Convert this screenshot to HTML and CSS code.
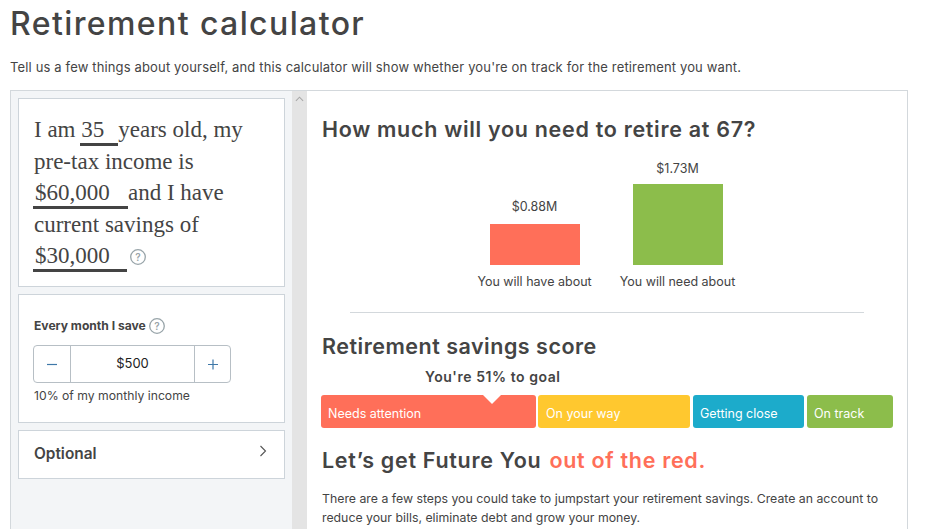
FILE: index.html
```html
<!DOCTYPE html>
<html lang="en">
<head>
    <meta charset="UTF-8">
    <title>Retirement calculator</title>
    <link rel="stylesheet" href="styles.css">
</head>
<body>

    <h1>Retirement calculator</h1>
    <p class="intro">Tell us a few things about yourself, and this calculator will show whether you're on track for the retirement you want.</p>

    <div class="calculator">
        <div class="sidebar">
            <div class="card sentence">
                I am <span class="field field-age">35</span>years old, my<br>
                pre-tax income is<br>
                <span class="field field-income">$60,000</span>and I have<br>
                current savings of<br>
                <span class="field field-savings">$30,000</span><svg class="help help-large" viewBox="0 0 16 16"><circle cx="8" cy="8" r="7.3"/><text x="8" y="11.5">?</text></svg>
            </div>

            <div class="card monthly">
                <div class="monthly-label">Every month I save
                    <svg class="help" viewBox="0 0 16 16"><circle cx="8" cy="8" r="7.3"/><text x="8" y="11.5">?</text></svg>
                </div>
                <div class="stepper">
                    <div class="step">
                        <svg viewBox="0 0 12 12"><path d="M1 6.5h10"/></svg>
                    </div>
                    <div class="amount">$500</div>
                    <div class="step">
                        <svg viewBox="0 0 12 12"><path d="M1 6.5h10M6 1.5v10"/></svg>
                    </div>
                </div>
                <div class="monthly-note">10% of my monthly income</div>
            </div>

            <div class="card optional">
                <span>Optional</span>
                <svg viewBox="0 0 8 12"><path d="M1.5 1l5 5-5 5"/></svg>
            </div>
        </div>

        <div class="scrollbar">
            <svg viewBox="0 0 10 6"><path d="M1 5l4-4 4 4"/></svg>
        </div>

        <div class="results">
            <h2 class="first">How much will you need to retire at 67?</h2>

            <div class="chart">
                <div class="chart-col">
                    <div class="chart-value">$0.88M</div>
                    <div class="bar bar-have"></div>
                    <div class="chart-label">You will have about</div>
                </div>
                <div class="chart-col">
                    <div class="chart-value">$1.73M</div>
                    <div class="bar bar-need"></div>
                    <div class="chart-label">You will need about</div>
                </div>
            </div>

            <hr>

            <h2 class="score-title">Retirement savings score</h2>
            <div class="goal">You're 51% to goal</div>

            <div class="score">
                <div class="segment seg-red">Needs attention<span class="marker"></span></div>
                <div class="segment seg-yellow">On your way</div>
                <div class="segment seg-blue">Getting close</div>
                <div class="segment seg-green">On track</div>
            </div>

            <h2 class="future">Let’s get Future You <span class="red">out of the red.</span></h2>

            <p class="steps">There are a few steps you could take to jumpstart your retirement savings. Create an account to reduce your bills, eliminate debt and grow your money.</p>
        </div>
    </div>

</body>
</html>
```

FILE: styles.css
```css
html, body {
    height: 529px;
    overflow: hidden;
}
body {
    font-family: "Inter", "Open Sans", sans-serif;
    color: #444;
    background-color: #fff;
    margin: 0;
    padding: 0 33px 0 10px;
    box-sizing: border-box;
}
h1 {
    font-size: 32px;
    line-height: 40px;
    font-weight: 500;
    letter-spacing: 1.4px;
    margin: 4px 0 0;
}
.intro {
    font-size: 13px;
    letter-spacing: 0.15px;
    line-height: 18px;
    margin: 14px 0 14px;
}
.calculator {
    display: flex;
    height: 439px;
    border: 1px solid #d3d8dc;
    border-bottom: 0;
    box-sizing: border-box;
}
.sidebar {
    width: 281px;
    flex: none;
    box-sizing: border-box;
    padding: 7px;
    background-color: #f3f5f7;
    display: flex;
    flex-direction: column;
    gap: 7px;
}
.card {
    background-color: #fff;
    border: 1px solid #cdd4da;
    box-sizing: border-box;
}
.sentence {
    height: 189px;
    padding: 15px 0 0 15px;
    font-family: "Liberation Serif", serif;
    font-size: 23px;
    line-height: 31px;
    color: #444;
}
.field {
    display: inline-block;
    line-height: 26px;
    height: 26px;
    border-bottom: 3px solid #444;
    padding-left: 1px;
    vertical-align: baseline;
}
.field-age { width: 37px; margin-left: -1px; }
.field-income { width: 93px; margin-left: -1px; padding-left: 2px; }
.field-savings { width: 92px; margin-left: -1px; padding-left: 2px; }
.help {
    width: 16px;
    height: 16px;
    vertical-align: -4px;
}
.help-large {
    margin-left: 3px;
    vertical-align: -2px;
}
.help circle {
    fill: none;
    stroke: #98a4a9;
    stroke-width: 1.3;
}
.help text {
    font-family: "Inter", sans-serif;
    font-size: 10px;
    font-weight: 600;
    fill: #98a4a9;
    text-anchor: middle;
}
.monthly {
    height: 129px;
    padding: 23px 0 0 15px;
}
.monthly-label {
    font-size: 12.1px;
    font-weight: 700;
    line-height: 16px;
    height: 16px;
    white-space: nowrap;
}
.stepper {
    display: flex;
    width: 198px;
    height: 38px;
    margin: 11px 0 0 -1px;
    border: 1px solid #b7bfc5;
    border-radius: 4px;
    box-sizing: border-box;
}
.step {
    width: 36px;
    flex: none;
    display: flex;
    align-items: center;
    justify-content: center;
}
.step:last-child {
    width: 35px;
}
.step svg {
    width: 12px;
    height: 12px;
    fill: none;
    stroke: #3f78a8;
    stroke-width: 1.2;
}
.amount {
    flex: 1;
    border-left: 1px solid #b7bfc5;
    border-right: 1px solid #b7bfc5;
    text-align: center;
    font-size: 13px;
    line-height: 35px;
    color: #222;
}
.monthly-note {
    font-size: 12.2px;
    line-height: 16px;
    margin-top: 5px;
}
.optional {
    height: 49px;
    padding: 0 17px 0 15px;
    display: flex;
    align-items: center;
    justify-content: space-between;
    font-size: 15.4px;
    font-weight: 600;
}
.optional span {
    margin-top: -3px;
}
.optional svg {
    width: 8px;
    height: 12px;
    margin-top: -7px;
    fill: none;
    stroke: #555;
    stroke-width: 1.1;
}
.scrollbar {
    width: 15px;
    flex: none;
    background-color: #e4e4e4;
    text-align: center;
}
.scrollbar svg {
    display: block;
    width: 9px;
    height: 6px;
    margin: 5px auto 0;
    fill: none;
    stroke: #a8a8a8;
    stroke-width: 1.2;
}
.results {
    flex: 1;
    min-width: 0;
    padding: 0 14px 0 15px;
}
h2 {
    font-size: 21.5px;
    line-height: 28px;
    font-weight: 600;
    letter-spacing: 0.7px;
    margin: 0;
}
h2.first {
    margin-top: 24px;
}
.chart {
    display: flex;
    justify-content: center;
    align-items: flex-end;
    height: 136px;
    margin: 11px 0 0 -3px;
}
.chart-col {
    width: 143px;
    display: flex;
    flex-direction: column;
    align-items: center;
    font-size: 12.5px;
}
.chart-value {
    line-height: 16px;
    margin-bottom: 9px;
}
.bar {
    width: 90px;
}
.bar-have {
    height: 41px;
    background-color: #ff6f59;
}
.bar-need {
    height: 81px;
    margin-top: -2px;
    background-color: #8cbd4b;
}
.chart-label {
    line-height: 16px;
    margin-top: 9px;
}
hr {
    border: 0;
    border-top: 1px solid #d3d8dc;
    margin: 22px 29px 0 28px;
}
h2.score-title {
    margin-top: 19px;
    letter-spacing: 0.5px;
}
.goal {
    font-size: 14px;
    font-weight: 600;
    letter-spacing: 0.55px;
    line-height: 18px;
    margin: 8px 0 9px 103px;
}
.score {
    display: flex;
    gap: 2px;
    height: 33px;
    margin-left: -1px;
}
.segment {
    position: relative;
    box-sizing: border-box;
    border-radius: 3px;
    color: #fff;
    font-size: 12.5px;
    line-height: 16px;
    padding: 11px 0 0 7px;
}
.seg-red { width: 215px; background-color: #ff6f59; }
.seg-yellow { width: 152px; background-color: #ffc82f; padding-left: 8px; }
.seg-blue { width: 111px; margin-left: 1px; background-color: #1cabcb; }
.seg-green { width: 86px; margin-left: 1px; background-color: #8cbd4b; }
.marker {
    position: absolute;
    top: 0;
    left: 162px;
    border-left: 9px solid transparent;
    border-right: 9px solid transparent;
    border-top: 9px solid #fff;
}
h2.future {
    margin-top: 18px;
}
.red {
    color: #ff6f59;
    margin-left: 2px;
}
.steps {
    font-size: 12.3px;
    line-height: 19px;
    margin: 15px 0 0;
}
```
